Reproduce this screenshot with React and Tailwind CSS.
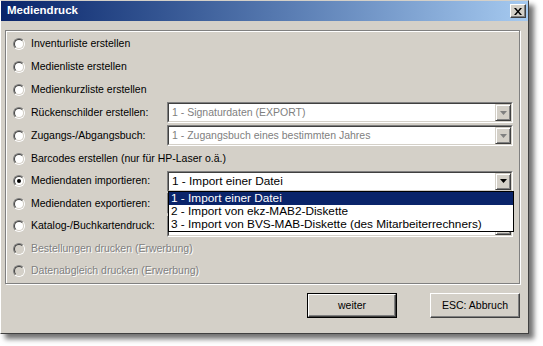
const font = { fontFamily: '"Liberation Sans", Arial, sans-serif' };

function Radio({ checked, disabled }) {
  return (
    <div className="w-[12px] h-[12px] shrink-0 rounded-full border border-t-[#808080] border-l-[#808080] border-r-white border-b-white">
      <div
        className={
          'w-full h-full rounded-full border border-t-[#404040] border-l-[#404040] border-r-[#d4d0c8] border-b-[#d4d0c8] flex items-center justify-center ' +
          (disabled ? 'bg-[#d4d0c8]' : 'bg-white')
        }
      >
        {checked && <div className="w-[4px] h-[4px] rounded-full bg-black" />}
      </div>
    </div>
  );
}

function Arrow({ disabled }) {
  return (
    <svg width="7" height="4" viewBox="0 0 7 4" className="block">
      <polygon points="0,0 7,0 3.5,4" fill={disabled ? '#808080' : '#000'} />
    </svg>
  );
}

function Combo({ value, disabled, big, children }) {
  return (
    <div className="relative w-[346px] h-[21px] border border-t-[#808080] border-l-[#808080] border-r-white border-b-white">
      <div className="w-full h-full flex border border-t-[#404040] border-l-[#404040] border-r-[#d4d0c8] border-b-[#d4d0c8] bg-white">
        <div
          className={
            'flex-1 pl-[3px] leading-[17px] whitespace-nowrap overflow-hidden ' +
            (big ? 'text-[11.8px] ' : 'text-[10.5px] ') +
            (disabled ? 'text-[#808080]' : 'text-black')
          }
        >
          {value}
        </div>
        <div className="w-[16px] h-full flex items-center justify-center bg-[#d4d0c8] border border-t-[#d4d0c8] border-l-[#d4d0c8] border-r-[#404040] border-b-[#404040] shadow-[inset_1px_1px_0_#fff,inset_-1px_-1px_0_#808080]">
          <Arrow disabled={disabled} />
        </div>
      </div>
      {children}
    </div>
  );
}

function Row({ h, label, checked, disabled, combo }) {
  return (
    <div className={'flex items-center ' + h}>
      <div className="w-[161px] shrink-0 flex items-center pl-[7px]">
        <Radio checked={checked} disabled={disabled} />
        <span
          className={
            'ml-[6px] text-[10.5px] whitespace-nowrap ' +
            (disabled ? 'text-[#808080] [text-shadow:1px_1px_0_#fff]' : 'text-black')
          }
        >
          {label}
        </span>
      </div>
      {combo}
    </div>
  );
}

function Button({ label, isDefault }) {
  return (
    <div className={'w-[90px] h-[25px] ' + (isDefault ? 'border border-black' : '')}>
      <div className="w-full h-full flex items-center justify-center text-[10.5px] text-black bg-[#d4d0c8] border border-t-white border-l-white border-r-[#404040] border-b-[#404040] shadow-[inset_-1px_-1px_0_#808080]">
        {label}
      </div>
    </div>
  );
}

export default function App() {
  const items = [
    '1 - Import einer Datei',
    '2 - Import von ekz-MAB2-Diskette',
    '3 - Import von BVS-MAB-Diskette (des Mitarbeiterrechners)',
  ];

  return (
    <div className="w-[543px] h-[346px] bg-white" style={font}>
      <div className="w-[529px] h-[334px] flex flex-col bg-[#d4d0c8] border border-t-[#d4d0c8] border-l-white border-r-[#404040] border-b-[#404040] shadow-[5px_5px_5px_rgba(0,0,0,0.55)]">
        <div className="h-[20px] flex items-center justify-between pl-[6px] pr-[2px] bg-gradient-to-r from-[#0a246a] to-[#a6caf0]">
          <span className="text-white font-bold text-[11.5px]">Mediendruck</span>
          <div className="w-[16px] h-[14px] flex items-center justify-center bg-[#d4d0c8] border border-t-white border-l-white border-r-[#404040] border-b-[#404040] shadow-[inset_-1px_-1px_0_#808080]">
            <svg width="8" height="7" viewBox="0 0 8 7">
              <path d="M0 0h2l2 2.5L6 0h2L5 3.5 8 7H6L4 4.5 2 7H0l3-3.5z" fill="#000" />
            </svg>
          </div>
        </div>

        <div className="mt-[9px] ml-[4px] w-[515px] h-[254px] border border-[#808080] shadow-[inset_1px_1px_0_#fff,1px_1px_0_#fff] pt-[1px]">
          <Row h="h-[23px]" label="Inventurliste erstellen" />
          <Row h="h-[23px]" label="Medienliste erstellen" />
          <Row h="h-[23px]" label="Medienkurzliste erstellen" />
          <Row
            h="h-[23px]"
            label="Rückenschilder erstellen:"
            combo={<Combo value="1 - Signaturdaten (EXPORT)" disabled />}
          />
          <Row
            h="h-[23px]"
            label="Zugangs-/Abgangsbuch:"
            combo={<Combo value="1 - Zugangsbuch eines bestimmten Jahres" disabled />}
          />
          <Row h="h-[23px]" label="Barcodes erstellen (nur für HP-Laser o.ä.)" />
          <div className="relative z-10">
            <Row
              h="h-[22px]"
              label="Mediendaten importieren:"
              checked
              combo={
                <Combo value="1 - Import einer Datei" big>
                  <div className="absolute left-0 top-full w-[346px] border border-black bg-white">
                    {items.map((t, i) => (
                      <div
                        key={t}
                        className={
                          'h-[13px] pl-[2px] text-[11.8px] leading-[13px] whitespace-nowrap ' +
                          (i === 0 ? 'bg-[#0a246a] text-white' : 'text-black')
                        }
                      >
                        {t}
                      </div>
                    ))}
                  </div>
                </Combo>
              }
            />
          </div>
          <Row h="h-[23px]" label="Mediendaten exportieren:" combo={<Combo value="" />} />
          <Row h="h-[22px]" label="Katalog-/Buchkartendruck:" combo={<Combo value="" />} />
          <Row h="h-[23px]" label="Bestellungen drucken (Erwerbung)" disabled />
          <Row h="h-[22px]" label="Datenabgleich drucken (Erwerbung)" disabled />
        </div>

        <div className="flex justify-end gap-[33px] mt-[9px] pr-[8px]">
          <Button label="weiter" isDefault />
          <Button label="ESC: Abbruch" />
        </div>
      </div>
    </div>
  );
}
